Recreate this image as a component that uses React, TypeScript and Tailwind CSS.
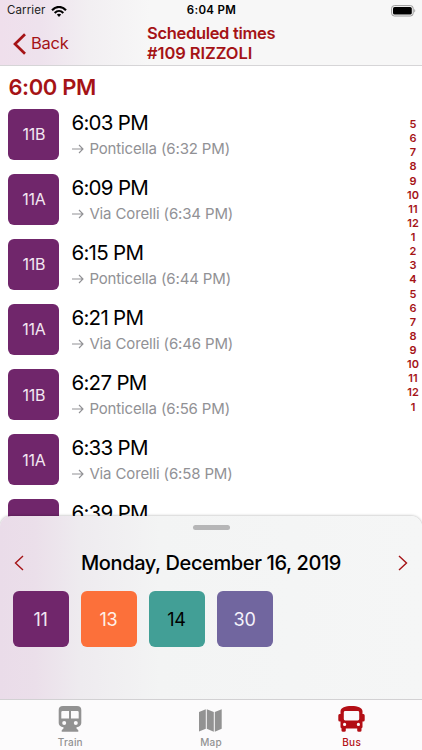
import React from 'react';

const departures = [
  { line: '11B', time: '6:03 PM', destination: 'Ponticella (6:32 PM)' },
  { line: '11A', time: '6:09 PM', destination: 'Via Corelli (6:34 PM)' },
  { line: '11B', time: '6:15 PM', destination: 'Ponticella (6:44 PM)' },
  { line: '11A', time: '6:21 PM', destination: 'Via Corelli (6:46 PM)' },
  { line: '11B', time: '6:27 PM', destination: 'Ponticella (6:56 PM)' },
  { line: '11A', time: '6:33 PM', destination: 'Via Corelli (6:58 PM)' },
  { line: '11B', time: '6:39 PM', destination: 'Ponticella (7:08 PM)' }
];

const hours = [5, 6, 7, 8, 9, 10, 11, 12, 1, 2, 3, 4, 5, 6, 7, 8, 9, 10, 11, 12, 1];

const lines = [
  { name: '11', style: 'bg-[#70266b] text-[#f3e6f2]' },
  { name: '13', style: 'bg-[#fc703a] text-[#fff0e8]' },
  { name: '14', style: 'bg-[#429f96] text-black' },
  { name: '30', style: 'bg-[#71669f] text-[#f5f3fb]' }
];

const StatusBar: React.FC = () => (
  <div className="grid h-[22px] grid-cols-3 items-center pl-[7px] pr-[6px] text-[11.5px] text-black">
    <div className="flex items-center gap-[5px]">
      <span className="tracking-[0.12px] text-[#222]">Carrier</span>
      <svg width="16" height="11" viewBox="0 0 16 11" fill="none" stroke="#000" strokeWidth="2.1">
        <path d="M1 4.2C5-.2 11-.2 15 4.2" />
        <path d="M3.7 6.9C6.3 4.3 9.7 4.3 12.3 6.9" />
        <path d="M5.8 8.6C7.1 7.5 8.9 7.5 10.2 8.6L8 10.9Z" fill="#000" stroke="none" />
      </svg>
    </div>
    <span className="text-center font-semibold tracking-[0.35px]">6:04 PM</span>
    <svg className="justify-self-end" width="25" height="12" viewBox="0 0 25 12">
      <rect x="0.6" y="0.6" width="21.6" height="10.4" rx="2.8" fill="none" stroke="#999" />
      <rect x="2" y="2" width="18.8" height="7.6" rx="1.6" fill="#000" />
      <path d="M23.3 4v3.6c1.3-.6 1.3-3 0-3.6Z" fill="#999" />
    </svg>
  </div>
);

const Header: React.FC = () => (
  <header className="h-[66px] shrink-0 border-b border-[#d6d5d7] bg-[linear-gradient(90deg,#efdfec_0px,#eee2ed_40px,#f2eff2_90px,#f7f7f7_150px,#f7f7f7_100%)] text-[#a51316]">
    <StatusBar />
    <div className="flex h-[43px]">
      <div className="flex w-[147px] items-center pl-[13px]">
        <svg width="13" height="22" viewBox="0 0 13 22" fill="none" stroke="currentColor" strokeWidth="2.7">
          <path d="M12 1.2L2 11L12 20.8" />
        </svg>
        <span className="ml-[5px] text-[16.5px] tracking-[-0.25px]">Back</span>
      </div>
      <h1 className="pt-[2px] text-[16.5px] font-semibold leading-[19.5px]">
        <span className="block tracking-[-0.32px]">Scheduled times</span>
        <span className="block tracking-[-0.08px]">#109 RIZZOLI</span>
      </h1>
    </div>
  </header>
);

const DepartureRow: React.FC<{ line: string; time: string; destination: string }> = ({ line, time, destination }) => (
  <div className="flex h-[65.15px] shrink-0">
    <div className="flex size-[51px] shrink-0 items-center justify-center rounded-[6px] bg-[#70266b] text-[16px] tracking-[-0.3px] text-[#f3e6f2]">
      {line}
    </div>
    <div className="ml-[12px]">
      <div className="text-[20.5px] leading-[28px] tracking-[-0.7px] text-black">{time}</div>
      <div className="flex items-center text-[15px] leading-[24px] tracking-[-0.14px] text-[#919195]">
        <svg className="mr-[5px] ml-[1px]" width="12" height="10" viewBox="0 0 12 10" fill="none" stroke="currentColor" strokeWidth="1.1">
          <path d="M0 5H11M7 1L11 5L7 9" />
        </svg>
        {destination}
      </div>
    </div>
  </div>
);

const DateSheet: React.FC = () => (
  <section className="absolute inset-x-0 top-[516px] h-[183px] rounded-t-[11px] bg-[linear-gradient(90deg,#eadce9_0px,#ebdfea_35px,#eeebef_80px,#f3f4f4_160px,#f5f6f6_100%)] shadow-[0_0_3px_rgba(0,0,0,0.35)]">
    <div className="flex justify-center pt-[9px]">
      <div className="h-[5px] w-[37px] rounded-full bg-[#b6b6b7]" />
    </div>
    <div className="mt-[17px] flex h-[31px] items-center justify-between px-[14px] text-[#a51316]">
      <svg width="10" height="16" viewBox="0 0 10 16" fill="none" stroke="currentColor" strokeWidth="1.4">
        <path d="M9 1L1.5 8L9 15" />
      </svg>
      <h2 className="text-[20px] font-medium tracking-[-0.38px] text-black">Monday, December 16, 2019</h2>
      <svg width="10" height="16" viewBox="0 0 10 16" fill="none" stroke="currentColor" strokeWidth="1.4">
        <path d="M1 1L8.5 8L1 15" />
      </svg>
    </div>
    <div className="mt-[13px] flex gap-[12px] pl-[12.5px]">
      {lines.map((line) => (
        <div key={line.name} className={`flex size-[56px] items-center justify-center rounded-[6px] text-[18px] tracking-[-0.3px] ${line.style}`}>
          {line.name}
        </div>
      ))}
    </div>
  </section>
);

const TabBar: React.FC = () => (
  <nav className="absolute inset-x-0 bottom-0 grid h-[51px] grid-cols-3 border-t border-[#d2d1d3] bg-[#fcfbfc] text-[10px] font-medium text-[#929292]">
    <div className="flex flex-col items-center pt-[6px]">
      <svg width="24" height="26" viewBox="0 0 24 26" fill="currentColor">
        <path fillRule="evenodd" d="M5 0H19Q23.3 0 23.3 4V17Q23.3 20.5 18.5 21.2V22.6L20.3 24.3V25.7H3.7V24.3L5.5 22.6V21.2Q.7 20.5 .7 17V4Q.7 0 5 0ZM4.5 5Q3.3 5 3.3 6.2V12.5H11V5ZM13 5V12.5H20.7V6.2Q20.7 5 19.5 5ZM6.2 15A2 2 0 1 0 6.2 19A2 2 0 1 0 6.2 15ZM17.8 15A2 2 0 1 0 17.8 19A2 2 0 1 0 17.8 15Z" />
      </svg>
      <span className="mt-[3px] leading-[14px] tracking-[0.2px]">Train</span>
    </div>
    <div className="flex flex-col items-center pt-[9px]">
      <svg width="23" height="23" viewBox="0 0 23 23" fill="currentColor">
        <path d="M0 3L6.8 .3V19.7L0 22.5ZM7.8 .3L14.8 3V22.7L7.8 19.7ZM15.8 3L22.7 .3V19.7L15.8 22.7Z" />
      </svg>
      <span className="mt-[3px] leading-[14px] tracking-[0.2px]">Map</span>
    </div>
    <div className="flex flex-col items-center pt-[6px] text-[#b30e15]">
      <svg width="27" height="26" viewBox="0 0 27 26" fill="currentColor">
        <path fillRule="evenodd" d="M2.5 5C3 1.5 7 0 13.5 0S24 1.5 24.5 5V8H25.5Q26.7 8 26.7 9.5V14Q26.7 15.5 25.2 15.5H24.5V21Q24.5 22 23.5 22.3V24.5Q23.5 25.8 22 25.8H20.7Q19.2 25.8 19.2 24.5V22.5H7.8V24.5Q7.8 25.8 6.3 25.8H5Q3.5 25.8 3.5 24.5V22.3Q2.5 22 2.5 21V15.5H1.8Q.3 15.5 .3 14V9.5Q.3 8 1.5 8H2.5ZM7.2 5Q5.8 5 5.8 6.4V13Q5.8 14.4 7.2 14.4H19.8Q21.2 14.4 21.2 13V6.4Q21.2 5 19.8 5ZM6.6 16.8A1.6 1.6 0 1 0 6.6 20A1.6 1.6 0 1 0 6.6 16.8ZM20.4 16.8A1.6 1.6 0 1 0 20.4 20A1.6 1.6 0 1 0 20.4 16.8Z" />
      </svg>
      <span className="mt-[3px] leading-[14px] tracking-[0.3px]">Bus</span>
    </div>
  </nav>
);

const App: React.FC = () => {
  return (
    <div className="relative flex h-[750px] w-[422px] flex-col overflow-hidden bg-white font-['Inter',sans-serif]">
      <Header />
      <main className="flex min-h-0 flex-1">
        <div className="flex flex-1 flex-col pl-[8.4px]">
          <h2 className="h-[42.5px] shrink-0 text-[22px] font-semibold leading-[43px] tracking-[-0.38px] text-[#a51316]">6:00 PM</h2>
          {departures.map((departure) => (
            <DepartureRow key={departure.time} {...departure} />
          ))}
        </div>
        {/* Hour index for jumping through the day */}
        <div className="w-[18px] pt-[51px] text-center text-[11px] font-semibold leading-[14.13px] text-[#a51316]">
          {hours.map((hour, i) => (
            <div key={i}>{hour}</div>
          ))}
        </div>
      </main>
      <DateSheet />
      <TabBar />
    </div>
  );
};

export default App;
